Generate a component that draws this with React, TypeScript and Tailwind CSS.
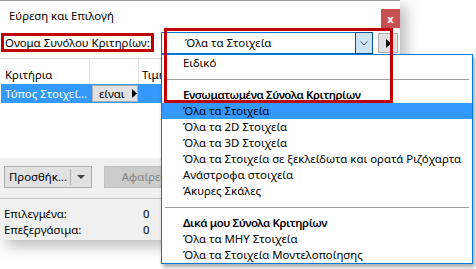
import React from "react";

const Tri = ({ dir, className }: { dir: "right" | "down"; className?: string }) =>
  dir === "right" ? (
    <svg width="5" height="9" viewBox="0 0 5 9" className={className}>
      <path d="M0 0 L5 4.5 L0 9 Z" fill="currentColor" />
    </svg>
  ) : (
    <svg width="8" height="4" viewBox="0 0 8 4" className={className}>
      <path d="M0 0 L8 0 L4 4 Z" fill="currentColor" />
    </svg>
  );

export default function App() {
  const rows: { t: string; kind?: "bold" | "sep" | "sel" }[] = [
    { t: "Ειδικό" },
    { t: "", kind: "sep" },
    { t: "Ενσωματωμένα Σύνολα Κριτηρίων", kind: "bold" },
    { t: "Όλα τα Στοιχεία", kind: "sel" },
    { t: "Όλα τα 2D Στοιχεία" },
    { t: "Όλα τα 3D Στοιχεία" },
    { t: "Όλα τα Στοιχεία σε ξεκλείδωτα και ορατά Ριζόχαρτα" },
    { t: "Ανάστροφα στοιχεία" },
    { t: "Άκυρες Σκάλες" },
    { t: "", kind: "sep" },
    { t: "Δικά μου Σύνολα Κριτηρίων", kind: "bold" },
    { t: "Όλα τα ΜΗΥ Στοιχεία" },
    { t: "Όλα τα Στοιχεία Μοντελοποίησης" },
  ];

  return (
    <div className="relative w-[476px] h-[269px] bg-white overflow-hidden font-['Noto_Sans',sans-serif] text-[11.4px] leading-[16px] text-black">
      {/* Dialog */}
      <div className="w-[400px] h-[240px] border-t border-[#9a9a9a] bg-[#f0f0f0] shadow-[6px_6px_14px_rgba(0,0,0,0.28)] flex flex-col">
        {/* title bar */}
        <div className="h-[30px] bg-white flex items-start justify-between">
          <span className="pl-[9px] pt-[7px]">Εύρεση και Επιλογή</span>
          <div className="mt-[8px] w-[19px] h-[19px] bg-[#c75050] flex items-center justify-center text-white font-bold text-[11px] leading-none">
            x
          </div>
        </div>
        {/* name row */}
        <div className="h-[27px] bg-white flex items-start">
          <div className="w-[161px] pl-[5px] pt-[4px] whitespace-nowrap">Ονομα Συνόλου Κριτηρίων:</div>
          <div className="mt-[1px] w-[212px] h-[22px] border border-[#0078d7] bg-white flex">
            <div className="flex-1 pl-[23px] pt-[2px]">Όλα τα Στοιχεία</div>
            <div className="-mt-px -mr-px w-[18px] h-[22px] border border-[#005499] bg-[#cce4f7] flex items-center justify-center">
              <svg width="8" height="5" viewBox="0 0 8 5">
                <path d="M0.5 0.5 L4 4 L7.5 0.5" fill="none" stroke="#444" strokeWidth="1" />
              </svg>
            </div>
          </div>
          <div className="ml-[5px] mt-[2px] w-[20px] h-[20px] border border-[#adadad] bg-[#e1e1e1] flex items-center justify-center text-black">
            <Tri dir="right" />
          </div>
        </div>
        {/* table */}
        <div className="h-[100px] bg-white border-t border-[#d4d4d4] flex flex-col">
          <div className="h-[25px] flex items-stretch">
            <div className="w-[90px] pl-[5px] pt-[8px] border-r border-[#e5e5e5]">Κριτήρια</div>
            <div className="w-[49px] border-r border-[#e5e5e5]"></div>
            <div className="pl-[3px] pt-[8px]">Τιμή</div>
          </div>
          <div className="ml-[1px] h-[19px] bg-[#3399ff] flex items-center">
            <div className="w-[91px] pl-[4px] text-white whitespace-nowrap">Τύπος Στοιχεί...</div>
            <div className="w-[46px] h-[17px] border border-[#adadad] bg-[#e1e1e1] flex items-center pl-[6px]">
              <span>είναι</span>
              <Tri dir="right" className="ml-[7px]" />
            </div>
          </div>
        </div>
        {/* buttons */}
        <div className="mt-[8px] flex pl-[4px]">
          <div className="w-[88px] h-[22px] border border-[#adadad] bg-[#e1e1e1] flex items-center">
            <span className="pl-[4px] w-[65px] whitespace-nowrap">Προσθήκ...</span>
            <div className="w-px h-[16px] bg-[#adadad]"></div>
            <Tri dir="down" className="ml-[6px] text-[#444]" />
          </div>
          <div className="ml-[12px] w-[88px] h-[22px] border border-[#bfbfbf] bg-[#cccccc] flex items-center justify-center text-[#838383]">
            Αφαίρεση
          </div>
        </div>
        <div className="mt-[10px] h-px bg-[#c4c4c4]"></div>
        <div className="mt-[7px] flex flex-col">
          <div className="flex h-[16px]">
            <span className="w-[143px] pl-[4px]">Επιλεγμένα:</span>
            <span>0</span>
          </div>
          <div className="flex h-[16px]">
            <span className="w-[143px] pl-[4px]">Επεξεργάσιμα:</span>
            <span>0</span>
          </div>
        </div>
      </div>

      {/* Dropdown list */}
      <div className="absolute left-[161px] top-[54px] w-[312px] h-[210px] border border-[#0078d7] bg-white shadow-[2px_3px_4px_rgba(0,0,0,0.35)] flex flex-col">
        {rows.map((r, i) =>
          r.kind === "sep" ? (
            <div key={i} className="h-[16px] flex items-center px-[3px]">
              <div className="h-px w-full bg-[#a0a0a0]"></div>
            </div>
          ) : (
            <div
              key={i}
              className={
                "h-[16px] pl-[21px] whitespace-nowrap " +
                (r.kind === "bold" ? "font-semibold tracking-[-0.4px] " : "") +
                (r.kind === "sel" ? "bg-[#3399ff] " : "")
              }
            >
              {r.t}
            </div>
          )
        )}
      </div>

      {/* Red annotation boxes */}
      <div className="absolute left-[1px] top-[33px] w-[153px] h-[19px] border-[3px] border-[#c00000]"></div>
      <div className="absolute left-[164px] top-[28px] w-[229px] h-[75px] border-[3px] border-[#c00000]"></div>
    </div>
  );
}
